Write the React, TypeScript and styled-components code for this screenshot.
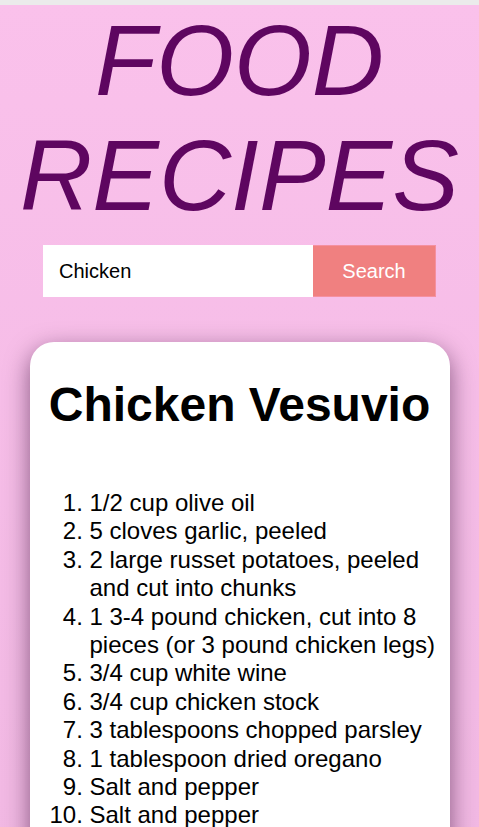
import React, { useState } from "react";
import styled, { createGlobalStyle } from "styled-components";

const GlobalStyle = createGlobalStyle`
  html, body {
    margin: 0;
    padding: 0;
  }
  body {
    font-family: "Liberation Sans", Arial, sans-serif;
    background: linear-gradient(180deg, #fac1eb 0%, #f1b8e3 100%);
    min-height: 100vh;
  }
`;

const TopStrip = styled.div`
  position: fixed;
  top: 0;
  left: 0;
  right: 0;
  height: 5px;
  background: #ebebeb;
  z-index: 10;
`;

const Page = styled.div`
  display: flex;
  flex-direction: column;
  align-items: center;
  padding-top: 3px;
  overflow: hidden;
`;

const Title = styled.h1`
  margin: 0;
  font-family: "Liberation Sans", Arial, sans-serif;
  font-size: 100px;
  font-style: italic;
  font-weight: 400;
  line-height: 115px;
  color: #5e0660;
  text-align: center;
  text-transform: uppercase;
`;

const SearchForm = styled.form`
  display: flex;
  margin-top: 12px;
  height: 52px;
`;

const SearchInput = styled.input`
  box-sizing: border-box;
  width: 270px;
  height: 100%;
  border: none;
  outline: none;
  padding: 0 16px;
  font-family: "Liberation Sans", Arial, sans-serif;
  font-size: 20px;
  color: #000;
  background: #fff;
`;

const SearchButton = styled.button`
  box-sizing: border-box;
  width: 123px;
  height: 100%;
  border: 1px solid #f590a0;
  border-left: none;
  background: #f08080;
  color: #fff;
  font-family: "Liberation Sans", Arial, sans-serif;
  font-size: 20px;
  cursor: pointer;
`;

const Card = styled.div`
  box-sizing: border-box;
  width: 420px;
  margin-top: 45px;
  background: #fff;
  border-radius: 24px;
  padding: 35px 10px 40px;
  box-shadow: 0 8px 24px rgba(40, 0, 40, 0.55);
`;

const RecipeTitle = styled.h2`
  margin: 0;
  font-family: "Liberation Sans", Arial, sans-serif;
  font-size: 48px;
  font-weight: 700;
  text-align: center;
  white-space: nowrap;
  color: #000;
`;

const Ingredients = styled.ol`
  margin: 57px 0 0;
  padding-left: 50px;
  font-family: "Liberation Sans", Arial, sans-serif;
  font-size: 24px;
  line-height: 28.4px;
  color: #000;
`;

const Ingredient = styled.li``;

const ingredients = [
  "1/2 cup olive oil",
  "5 cloves garlic, peeled",
  "2 large russet potatoes, peeled and cut into chunks",
  "1 3-4 pound chicken, cut into 8 pieces (or 3 pound chicken legs)",
  "3/4 cup white wine",
  "3/4 cup chicken stock",
  "3 tablespoons chopped parsley",
  "1 tablespoon dried oregano",
  "Salt and pepper",
  "Salt and pepper",
  "1 cup frozen peas, thawed",
];

export default function App() {
  const [query, setQuery] = useState("Chicken");
  return (
    <>
      <GlobalStyle />
      <TopStrip />
      <Page>
        <Title>
          Food
          <br />
          Recipes
        </Title>
        <SearchForm onSubmit={(e) => e.preventDefault()}>
          <SearchInput value={query} onChange={(e) => setQuery(e.target.value)} />
          <SearchButton type="submit">Search</SearchButton>
        </SearchForm>
        <Card>
          <RecipeTitle>Chicken Vesuvio</RecipeTitle>
          <Ingredients>
            {ingredients.map((item, i) => (
              <Ingredient key={i}>{item}</Ingredient>
            ))}
          </Ingredients>
        </Card>
      </Page>
    </>
  );
}
